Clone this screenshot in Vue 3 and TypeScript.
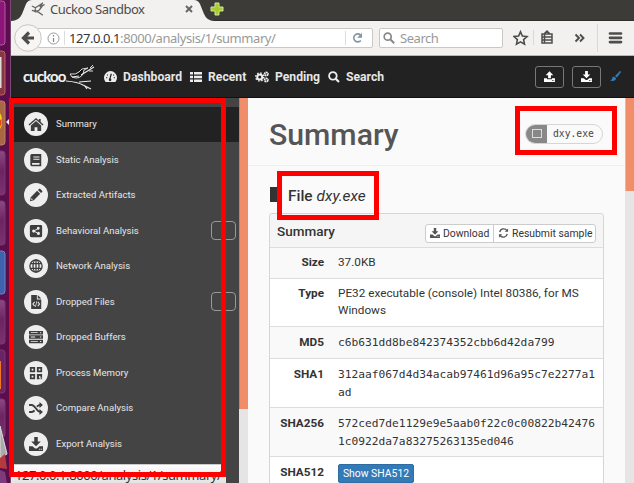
<script setup lang="ts">
interface NavItem { label: string; icon: string; active?: boolean; badge?: boolean }
interface Row { label: string; lines: string[]; mono?: boolean; height: number }

const icons: Record<string, string> = {
  home: 'M0 8 8 1l3 2.6V2h2v3.4L16 8l-1 1.1L8 3 1 9.100ZM2.500 9 8 4.200 13.500 9v6h-4v-4h-3v4h-4Z',
  book: 'M3 1h11v14H3Q1.500 15 1.500 13V3Q1.500 1 3 1ZM5 4v1.200h7V4Zm0 2.600v1.200h7V6.600ZM3.500 11.500v2H12v-2Z',
  pencil: 'M1 15 2 10.500 9.300 3.200l3.500 3.500L5.500 14ZM10.200 2.300 11.500 1q.8-.6 1.500 0l2 2q.6.8 0 1.500l-1.300 1.300ZM3 11.500l-.6 2.200 2.100-.6Z',
  share: 'M2.500 1h11q1.500 0 1.500 1.500v11q0 1.500-1.500 1.500h-11Q1 15 1 13.500v-11Q1 1 2.500 1ZM10.700 3.200a1.700 1.700 0 0 0-1.600 2.200L6.500 6.900a1.700 1.700 0 1 0 0 2.300l2.600 1.400a1.700 1.700 0 1 0 .5-1L7 8.200v-.4l2.700-1.400a1.700 1.700 0 1 0 1-3.200Z',
  file: 'M2.500 0H9v5h5v11H2.500ZM10 0l4 4h-4ZM6 7.500 3.700 10.200 6 13l.9-.7-1.700-2.100 1.700-2Zm4.500 0-.9.700 1.700 2-1.700 2.100.9.700 2.300-2.800ZM8.500 7 7 13.500l.8.2L9.300 7.200Z',
  server: 'M0 1h16v4H0Zm0 5h16v4H0Zm0 5h16v4H0ZM2 2.500v1h8v-1Zm0 5v1h5v-1Zm0 5v1h8v-1Zm10.500-10v1.200h1.500V2.500Zm0 5v1.200h1.500V7.500Zm0 5v1.200h1.500v-1.200Z',
  qr: 'M1 1h6v6H1Zm2 2v2h2V3Zm6-2h6v6H9Zm2 2v2h2V3ZM1 9h6v6H1Zm2 2v2h2v-2ZM9 9h6v4h-2v-1.500h-1.500V15H9Zm3 4.500h1V15h-1Zm2 0h1V15h-1Z',
  download: 'M6 0h4v5h3.500L8 10.700 2.500 5H6ZM0 10.500h4l3 2.500h2l3-2.500h4V16H0ZM11.500 13.500v1H13v-1Zm2.300 0v1h1.200v-1Z',
  upload: 'M6 10.500h4V6h3.500L8 .3 2.500 6H6ZM0 10.500h4.500V12h7v-1.500H16V16H0ZM11.500 13.500v1H13v-1Zm2.300 0v1h1.200v-1Z',
}

const nav: NavItem[] = [
  { label: 'Summary', icon: 'home', active: true },
  { label: 'Static Analysis', icon: 'book' },
  { label: 'Extracted Artifacts', icon: 'pencil' },
  { label: 'Behavioral Analysis', icon: 'share', badge: true },
  { label: 'Network Analysis', icon: 'globe' },
  { label: 'Dropped Files', icon: 'file', badge: true },
  { label: 'Dropped Buffers', icon: 'server' },
  { label: 'Process Memory', icon: 'qr' },
  { label: 'Compare Analysis', icon: 'shuffle' },
  { label: 'Export Analysis', icon: 'download' },
]

const rows: Row[] = [
  { label: 'Size', lines: ['37.0KB'], height: 31 },
  { label: 'Type', lines: ['PE32 executable (console) Intel 80386, for MS', 'Windows'], height: 48 },
  { label: 'MD5', lines: ['c6b631dd8be842374352cbb6d42da799'], mono: true, height: 32 },
  { label: 'SHA1', lines: ['312aaf067d4d34acab97461d96a95c7e2277a1', 'ad'], mono: true, height: 49 },
  { label: 'SHA256', lines: ['572ced7de1129e9e5aab0f22c0c00822b42476', '1c0922da7a83275263135ed046'], mono: true, height: 49 },
  { label: 'SHA512', lines: [], height: 49 },
]
</script>

<template>
  <div class="screen">
    <aside class="launcher">
      <svg width="11" height="483" viewBox="0 0 11 483">
        <defs>
          <linearGradient id="tile" x1="0" y1="0" x2="0" y2="1">
            <stop offset="0" stop-color="#8c4a82" /><stop offset=".45" stop-color="#6d2461" /><stop offset="1" stop-color="#7c3271" />
          </linearGradient>
        </defs>
        <rect x="-8" y="1" width="13" height="44" rx="3" fill="#8b1677" stroke="#b45aa5" />
        <rect x="-8" y="51" width="13" height="44" rx="3" fill="#88363f" stroke="#b9626a" />
        <path d="M0 57h1.500v31H0z" fill="#ddd" />
        <rect x="-8" y="101" width="13" height="44" rx="3" fill="#a96843" stroke="#bf8060" />
        <path d="M0 113q3 5 1.500 13L0 129z" fill="#f7d21c" /><path d="M0 120l1.500-1v5L0 127z" fill="#dd4814" />
        <rect x="-8" y="151" width="13" height="44" rx="3" fill="url(#tile)" stroke="#7b3971" />
        <rect x="-8" y="201" width="13" height="44" rx="3" fill="url(#tile)" stroke="#7b3971" />
        <rect x="-8" y="251" width="13" height="43" rx="3" fill="#3f62ae" stroke="#6c86c0" />
        <rect x="-8" y="300" width="13" height="44" rx="3" fill="url(#tile)" stroke="#7b3971" />
        <rect x="-8" y="350" width="13" height="43" rx="3" fill="#6b2463" stroke="#7b3971" />
        <path d="M0 361h1v28H0z" fill="#ef7622" />
        <rect x="-8" y="399" width="13" height="38" rx="3" fill="url(#tile)" stroke="#7b3971" />
        <path d="M0 426 7 454 0 458z" fill="#aaa" stroke="#ddd" /><path d="m0 458 5-4 2 15-7-1z" fill="#b43a3b" /><path d="m0 470 5 2 2 11H0z" fill="#7e3b7b" />
        <path d="m6 122 3-3v6z" fill="#eee" />
      </svg>
    </aside>

    <div class="browser">
      <header class="tabs">
        <svg class="tabshape" width="200" height="21" viewBox="0 0 200 21"><path d="M0 21Q8 21 11 14L15 4Q17 0 21 0H183Q187 0 189 4L193 14Q196 21 203 21Z" fill="#f2f1f0" /></svg>
        <svg class="bird" width="14" height="15" viewBox="0 0 32 32"><path d="M2 8 10 12 27 1 20 10 31 5M10 12Q8 24 19 17L26 8M2 18 17 22 27 29M11 22 6 18" fill="none" stroke="#666" stroke-width="3" /></svg>
        <span class="tabtitle">Cuckoo Sandbox</span>
        <svg class="close" width="8" height="8" viewBox="0 0 8 8"><path d="m1 1 6 6m0-6L1 7" stroke="#666" stroke-width="2" /></svg>
        <svg class="plus" width="14" height="14" viewBox="0 0 14 14"><path d="M5 1h4v4h4v4H9v4H5V9H1V5h4z" fill="#a5cb35" stroke="#d6e792" stroke-width="1" /></svg>
      </header>

      <div class="toolbar">
        <svg class="back" width="28" height="28" viewBox="0 0 28 28"><circle cx="14" cy="14" r="13.300" fill="#f7f6f5" stroke="#c9c5c1" /><path d="M20 14H10m5-5.500L9.500 14l5.500 5.500" fill="none" stroke="#4d4d4d" stroke-width="3.200" /></svg>
        <div class="url">
          <svg width="13" height="13" viewBox="0 0 13 13"><circle cx="6.500" cy="6.500" r="5.500" fill="none" stroke="#999" /><path d="M6.500 3v1.500m0 1.500v4" stroke="#888" stroke-width="1.300" /></svg>
          <i class="sep" /><span class="address"><b>127.0.0.1</b>:8000/analysis/1/summary/</span>
          <i class="sep reloadsep" />
          <svg width="11" height="12" viewBox="0 0 11 12"><path d="M8.800 8.500A4 4 0 1 1 8.500 3" fill="none" stroke="#8695a0" stroke-width="1.600" /><path d="M10 .8v5H5.200z" fill="#8695a0" /></svg>
        </div>
        <div class="searchbox">
          <svg width="12" height="12" viewBox="0 0 12 12"><circle cx="4.700" cy="4.700" r="3.500" fill="none" stroke="#888" stroke-width="1.700" /><path d="m7.500 7.500 3.700 3.700" stroke="#888" stroke-width="2" /></svg><span>Search</span>
        </div>
        <svg class="tools" width="121" height="34" viewBox="0 0 121 34">
          <path d="m7.500 10.800 1.900 4.200 4.600.5-3.400 3.100.9 4.600-4-2.300-4 2.300.9-4.600L1 15.500l4.600-.5z" fill="none" stroke="#4d4d4d" stroke-width="1.600" />
          <path d="M20.500 9v15M84.500 3v28" stroke="#dad8d5" />
          <path d="M29 13h10v9H29zM31.500 12.500l2.500-2.500 2.500 2.500M28.500 16h11M28.500 19h11M31.500 13v9" fill="none" stroke="#4d4d4d" stroke-width="1.500" />
          <path d="m62.500 13.500 3.500 3.500-3.500 3.500m4.500-7 3.500 3.500-3.500 3.500" fill="none" stroke="#4d4d4d" stroke-width="1.900" />
          <path d="M97 12.500h11M97 16.800h11M97 21.100h11" stroke="#4d4d4d" stroke-width="2.700" stroke-linecap="round" />
        </svg>
      </div>

      <nav class="navbar">
        <div class="brand"><span>cuckoo</span>
          <svg width="29" height="26" viewBox="0 0 29 26"><path d="M4 9q6 1 9-2l3-3 6-1-4 2q-1 8-8 8-5 0-6-4Z" fill="#111" stroke="#ddd" /><path d="M15 10 28 2M0 16q12 1 17 4l8 4M13 17l12-1M18 20l3 4M6 12l7-1" fill="none" stroke="#eee" stroke-width="1.100" /><path d="m24 3 3-3M23 6l4 0" stroke="#ddd" /></svg>
        </div>
        <a class="dash"><svg width="13" height="12" viewBox="0 0 16 14"><path d="M2 13A8 8 0 1 1 14 13Z" fill="#ededed" /><path d="m7 10 2-7" stroke="#222" stroke-width="1.500" /><circle cx="7.500" cy="10.500" r="1.600" fill="#222" /><path d="M2.500 8H4M3.700 4l1 1m6.600 0 1-1M12 8h1.500" stroke="#222" stroke-width="1.300" /></svg><span>Dashboard</span></a>
        <a class="recent"><svg width="12" height="10" viewBox="0 0 12 10"><path d="M0 0h3v2.500H0zM4 0h8v2.500H4zM0 3.700h3v2.500H0zm4 0h8v2.500H4zM0 7.400h3v2.500H0zm4 0h8v2.500H4z" fill="#ededed" /></svg><span>Recent</span></a>
        <a class="pending"><svg width="14" height="12" viewBox="0 0 28 24"><circle cx="9.500" cy="12" r="5" fill="none" stroke="#ededed" stroke-width="4" /><circle cx="9.500" cy="12" r="8" fill="none" stroke="#ededed" stroke-width="3" stroke-dasharray="3 3.280" /><circle cx="22.500" cy="6" r="3.300" fill="none" stroke="#ededed" stroke-width="3.500" stroke-dasharray="3.500 .8" /><circle cx="22.500" cy="18" r="3.300" fill="none" stroke="#ededed" stroke-width="3.500" stroke-dasharray="3.500 .8" /></svg><span>Pending</span></a>
        <a class="search"><svg width="12" height="12" viewBox="0 0 12 12"><circle cx="4.900" cy="4.900" r="3.800" fill="none" stroke="#ededed" stroke-width="1.800" /><path d="m7.700 7.700 3.300 3.300" stroke="#ededed" stroke-width="2.200" /></svg><span>Search</span></a>
        <button class="navbtn"><svg width="11" height="11" viewBox="0 0 16 16"><path :d="icons.upload" fill="#fff" fill-rule="evenodd" /></svg></button>
        <button class="navbtn"><svg width="11" height="11" viewBox="0 0 16 16"><path :d="icons.download" fill="#fff" fill-rule="evenodd" /></svg></button>
        <svg class="brush" width="11" height="11" viewBox="0 0 11 11"><path d="M10 0q1 0 1 1L7 6.500 5 5Zm-6 5.500L6.200 7.300Q5.500 11 0 9.800q2-.5 2-2.300 0-1.500 2-2Z" fill="#337ab7" /></svg>
      </nav>

      <div class="body">
        <aside class="sidebar">
          <div v-for="item in nav" :key="item.label" class="item" :class="{ active: item.active }">
            <span class="disc">
              <svg v-if="item.icon === 'globe'" width="14" height="14" viewBox="0 0 16 16"><g fill="none" stroke="#3d3d3d" stroke-width="1.500"><circle cx="8" cy="8" r="7" /><ellipse cx="8" cy="8" rx="3.400" ry="7" /><path d="M1.500 5.300h13M1.500 10.700h13M8 1v14" /></g></svg>
              <svg v-else-if="item.icon === 'shuffle'" width="14" height="13" viewBox="0 0 16 15"><path d="M0 3.500h3q2 0 5 4t5 4M0 11.500h3q2 0 3.300-1.800M9 5.300q2-1.800 4-1.800" fill="none" stroke="#3d3d3d" stroke-width="2.200" /><path d="M12 0l4 3.500L12 7zM12 8l4 3.500-4 3.500z" fill="#3d3d3d" /></svg>
              <svg v-else :width="item.icon === 'home' ? 16 : 14" :height="item.icon === 'home' ? 15 : 14" viewBox="0 0 16 16"><path :d="icons[item.icon]" fill="#3d3d3d" fill-rule="evenodd" /></svg>
            </span>
            <span class="label">{{ item.label }}</span>
            <i v-if="item.badge" class="badge" />
          </div>
        </aside>
        <div class="scroll left"><i /></div>
        <main>
          <div class="heading"><h1>Summary</h1>
            <div class="pill"><span class="square"><i /></span><code>dxy.exe</code></div>
          </div>
          <h2><i class="fileicon" /><b>File</b> <em>dxy.exe</em></h2>
          <section class="panel">
            <div class="panelhead"><strong>Summary</strong>
              <div class="group">
                <button class="dl"><svg width="10" height="10" viewBox="0 0 16 16"><path :d="icons.download" fill="#555" fill-rule="evenodd" /></svg><span>Download</span></button>
                <button class="rs"><svg width="11" height="10" viewBox="0 0 12 12"><path d="M1.500 5A4.700 4.700 0 0 1 10 3M10.500 7A4.700 4.700 0 0 1 2 9" fill="none" stroke="#555" stroke-width="1.600" /><path d="M11.500.5v4h-4zM.5 11.500v-4h4z" fill="#555" /></svg><span>Resubmit sample</span></button>
              </div>
            </div>
            <div v-for="row in rows" :key="row.label" class="row" :style="{ height: row.height + 'px' }">
              <b>{{ row.label }}</b>
              <div v-if="row.lines.length" class="value" :class="{ mono: row.mono }"><div v-for="line in row.lines" :key="line">{{ line }}</div></div>
              <button v-else class="show">Show SHA512</button>
            </div>
          </section>
        </main>
        <div class="scroll right"><i /></div>
      </div>
    </div>

    <div class="status">127.0.0.1:8000/analysis/1/summary/</div>
    <i class="mark one" /><i class="mark two" /><i class="mark three" />
  </div>
</template>

<style>
body { margin: 0; overflow: hidden; }
</style>

<style scoped>
* { box-sizing: border-box; }
.screen { position: relative; display: flex; width: 634px; height: 483px; overflow: hidden; font-family: Roboto, sans-serif; background: #fafafa; }
svg { display: block; flex: none; }
button { font-family: inherit; padding: 0; margin: 0; }
.launcher { width: 11px; height: 483px; background: #5b0d4d; border-right: 1px solid #7a4a72; flex: none; }
.browser { width: 623px; display: flex; flex-direction: column; }
.tabs { height: 21px; background: #3c3b37; position: relative; display: flex; align-items: center; padding-left: 20px; flex: none; border-bottom: 1px solid #2f2e2a; }
.tabshape { position: absolute; left: 0; top: 0; overflow: visible; }
.bird, .tabtitle, .close, .plus { position: relative; }
.bird { margin-top: -2px; }
.tabtitle { font: 13px/18px "Noto Sans", sans-serif; color: #4c4c4c; margin-left: 5px; margin-top: -3px; width: 124px; white-space: nowrap; letter-spacing: -.5px; }
.close { margin-left: 11px; margin-top: -2px; }
.plus { margin-left: 17px; margin-top: -2px; }
.toolbar { height: 35px; background: #f2f1f0; border-bottom: 1px solid #b9b7b4; display: flex; align-items: center; padding-left: 3px; flex: none; }
.back { position: relative; z-index: 1; }
.url { margin-left: -5px; width: 336px; height: 20px; border: 1px solid #cbc7c3; border-radius: 2px; background: #fff; display: flex; align-items: center; padding-left: 9px; font-family: "Noto Sans", sans-serif; }
.sep { width: 1px; height: 14px; background: #ddd; margin-left: 4px; flex: none; }
.address { font-size: 13px; line-height: 18px; color: #999; width: 276px; margin-left: 4px; letter-spacing: -.44px; white-space: nowrap; }
.address b { color: #333; font-weight: 400; }
.reloadsep { margin-left: 0; margin-right: 6px; }
.searchbox { margin-left: 6px; width: 124px; height: 20px; border: 1px solid #cbc7c3; border-radius: 2px; background: #fff; display: flex; align-items: center; padding-left: 3px; gap: 5px; font: 13px/18px "Noto Sans", sans-serif; letter-spacing: -.45px; color: #999; }
.tools { margin-left: 10px; }
.navbar { height: 42px; background: #222; border-bottom: 1px solid #101010; display: flex; align-items: center; color: #e6e6e6; padding-left: 12px; flex: none; font-size: 12.200px; font-weight: 700; }
.brand { display: flex; width: 81px; align-items: center; }
.brand span { font: 700 15px/18px Lato, sans-serif; letter-spacing: -.9px; width: 43px; margin-top: -2px; color: #f2f2f2; }
.brand svg { margin-left: 0; margin-top: 2px; }
.navbar a { display: flex; align-items: center; gap: 6px; white-space: nowrap; }
.dash { width: 86px; }
.navbar .recent { width: 65px; }
.pending { width: 73px; }
.search { width: 207px; }
.navbtn { width: 29px; height: 22px; border: 1px solid #777; border-radius: 3px; background: #222; display: grid; place-items: center; margin-right: 8px; flex: none; }
.brush { margin-left: 1px; }
.body { flex: 1; display: flex; min-height: 0; height: 385px; }
.sidebar { width: 228px; background: #444; padding-top: 8.500px; flex: none; }
.item { height: 35.500px; display: flex; align-items: center; padding-left: 13px; color: #e6e6e6; font-size: 9.600px; }
.item.active { background: #222; }
.disc { width: 24px; height: 24px; border-radius: 50%; background: #eee; display: grid; place-items: center; margin-right: 8px; flex: none; }
.label { flex: 1; white-space: nowrap; margin-top: -1px; }
.badge { width: 25px; height: 19px; border: 1px solid #999; border-radius: 4px; margin-right: 3px; }
.scroll { background: #e5e5e5; flex: none; }
.scroll i { display: block; background: #ef8e68; border-left: 1px solid #cc7c60; }
.left { width: 9px; } .left i { height: 311px; }
.right { width: 9px; } .right i { height: 93px; border-left-color: #f4b29a; }
main { width: 377px; background: #fafafa; color: #333; flex: none; }
.heading { height: 68px; border-bottom: 1px solid #eee; display: flex; justify-content: space-between; align-items: center; padding: 4px 22px 0 21px; }
h1 { font-weight: 500; font-size: 30.200px; line-height: 40px; color: #555; margin: 2px 0 0; }
.pill { display: flex; width: 78px; height: 20px; border: 1px solid #d6d6d6; border-radius: 10px; overflow: hidden; align-items: center; margin-top: 0; }
.square { width: 21px; height: 20px; background: #888; display: grid; place-items: center; flex: none; }
.square i { width: 10px; height: 9px; border: 1px solid #ddd; }
.pill code { font: 9.700px/18px "DejaVu Sans Mono", monospace; margin-left: 6px; color: #444; }
h2 { height: 47px; margin: 0; padding: 13px 0 0 22px; font-size: 15.400px; font-weight: 400; line-height: 34px; display: flex; align-items: center; }
h2 b { font-weight: 500; margin-right: 4px; }
.fileicon { width: 8px; height: 15px; background: #333; margin-right: 10px; margin-top: -3px; }
.panel { width: 335px; margin-left: 21px; border: 1px solid #d6d6d6; border-bottom: 0; border-radius: 4px 4px 0 0; background: #fff; }
.panelhead { height: 34px; background: #f5f5f5; border-bottom: 1px solid #ddd; display: flex; align-items: center; justify-content: space-between; padding: 2px 7px 0; border-radius: 3px 3px 0 0; }
.panelhead strong { font-weight: 500; font-size: 13.500px; margin-top: -2px; }
.group { display: flex; margin-top: 3px; height: 19px; border: 1px solid #ccc; border-radius: 3px; background: #fff; }
.group button { border: 0; background: none; display: flex; align-items: center; gap: 3px; font-size: 10.400px; color: #333; padding-left: 4px; white-space: nowrap; }
.dl { width: 67px; }
.group .rs { width: 102px; border-left: 1px solid #ccc; }
.row { display: grid; grid-template-columns: 54px 1fr; column-gap: 14px; align-items: start; padding-top: 6px; border-bottom: 1px solid #ddd; font-size: 11.750px; line-height: 17px; }
.row:nth-child(even) { background: #f9f9f9; }
.row b { text-align: right; font-weight: 700; }
.row:nth-child(n + 4) b { margin-top: 1px; }
.value { white-space: nowrap; }
.mono { font: 11.240px/17.500px "DejaVu Sans Mono", monospace; padding-top: 1px; }
.show { width: 76px; height: 19px; margin-top: 1px; border: 1px solid #2e6da4; border-radius: 2px; background: #337ab7; color: #fff; font-size: 10.400px; }
.status { position: absolute; left: 11px; top: 464px; width: 215px; height: 19px; background: linear-gradient(#fff, #e4e4e4); border-top: 1px solid #ccc; font: 13px/21px "Noto Sans", sans-serif; letter-spacing: -.44px; color: #333; padding-left: 4px; white-space: nowrap; }
.mark { position: absolute; border: 5px solid #f00; }
.one { left: 9px; top: 98px; width: 217px; height: 379px; }
.two { left: 277px; top: 171px; width: 102px; height: 49px; }
.three { left: 515px; top: 106px; width: 102px; height: 49px; }
</style>
